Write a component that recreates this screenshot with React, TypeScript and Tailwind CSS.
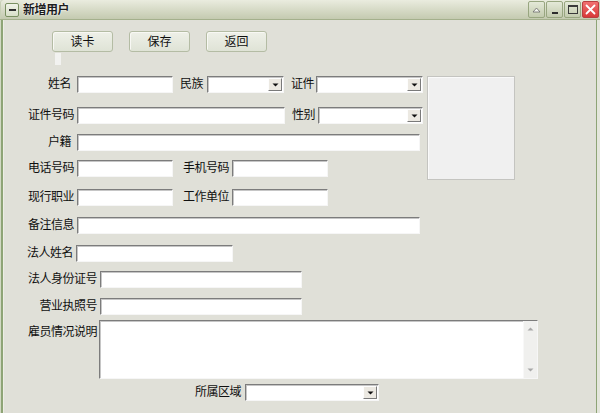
import React from "react";

const sunken =
  "bg-white border border-t-[#7c7c7c] border-l-[#7c7c7c] border-r-[#f6f6f6] border-b-[#f6f6f6] shadow-[inset_1px_1px_0_#c6c6c6]";

function Input({ w }: { w: string }) {
  return <div className={`h-[17px] ${w} ${sunken}`} />;
}

function Combo({ w }: { w: string }) {
  return (
    <div className={`h-[17px] ${w} ${sunken} flex justify-end p-[1px]`}>
      <div className="w-[14px] h-full bg-[#ece9e2] border border-t-[#fdfdfd] border-l-[#fdfdfd] border-r-[#7a7a7a] border-b-[#7a7a7a] flex items-center justify-center">
        <svg width="7" height="4" viewBox="0 0 7 4">
          <path d="M0.5 0.5 H6.5 L3.5 3.5 Z" fill="#111" />
        </svg>
      </div>
    </div>
  );
}

function Label({ w, text, cls = "text-right" }: { w: string; text: string; cls?: string }) {
  return (
    <span className={`${w} ${cls} shrink-0 leading-[17px] whitespace-nowrap tracking-[-0.5px] text-[#101010]`}>
      {text}
    </span>
  );
}

function TitleBtn({ children, red = false }: { children: React.ReactNode; red?: boolean }) {
  return (
    <div
      className={
        red
          ? "w-[17px] h-[17px] rounded-[2px] border border-[#b84040] bg-linear-to-b from-[#f07070] to-[#d83838] flex items-center justify-center"
          : "w-[17px] h-[17px] rounded-[2px] border border-[#98a680] bg-linear-to-b from-[#e4e9d8] to-[#c3cbae] flex items-center justify-center"
      }
    >
      {children}
    </div>
  );
}

function PushBtn({ text }: { text: string }) {
  return (
    <div className="w-[61px] h-[21px] rounded-[3px] border border-[#b4bca4] bg-linear-to-b from-[#eef0e8] to-[#dfe3d6] flex items-center justify-center text-[12px] text-[#101010] shadow-[inset_1px_1px_0_#f8f8f4]">
      {text}
    </div>
  );
}

export default function App() {
  return (
    <div className="w-[600px] h-[413px] overflow-hidden bg-[#e0e0d8] font-['Liberation_Sans','Noto_Sans_CJK_SC',sans-serif] text-[12px] flex flex-col">
      {/* Title bar */}
      <div className="h-[20px] shrink-0 flex items-center bg-linear-to-b from-[#eaecdf] to-[#c4cab0] border-b border-[#a4b08c] rounded-t-[3px] shadow-[inset_1px_0_0_#c8d0b6,inset_-1px_0_0_#c8d0b6]">
        <div className="ml-[5px] w-[14px] h-[14px] rounded-[2px] border border-[#7a9062] bg-linear-to-b from-[#f0f3e8] to-[#d8dfc8] flex items-center justify-center">
          <div className="w-[7px] h-[2px] bg-[#303030]" />
        </div>
        <span className="ml-[4px] font-bold text-[12px] text-[#1c1c1c] tracking-[-0.5px] [text-shadow:0_0_2px_#ffffff,0_0_1px_#ffffff]">
          新增用户
        </span>
        <div className="ml-auto mr-[1px] flex gap-[1px] items-center">
          <TitleBtn>
            <svg width="9" height="6" viewBox="0 0 9 6">
              <path d="M1 5 L4.5 1 L8 5 Z" fill="#f4f6ee" stroke="#6a6a6a" strokeWidth="0.8" />
            </svg>
          </TitleBtn>
          <TitleBtn>
            <div className="w-[6px] h-[2px] bg-[#2c2c2c] mt-[6px]" />
          </TitleBtn>
          <TitleBtn>
            <div className="w-[10px] h-[9px] border border-[#3a3a3a] border-t-2" />
          </TitleBtn>
          <TitleBtn red>
            <svg width="11" height="11" viewBox="0 0 11 11">
              <path d="M1.5 1.5 L9.5 9.5 M9.5 1.5 L1.5 9.5" stroke="#ffffff" strokeWidth="1.8" strokeLinecap="round" />
            </svg>
          </TitleBtn>
        </div>
      </div>

      {/* Body */}
      <div className="flex-1 flex flex-col shadow-[inset_1px_0_0_#d2d9c4,inset_3px_0_0_#8ea476,inset_4px_0_0_#eceee4,inset_-3px_0_0_#e4e6dc,inset_-4px_0_0_#8ea476]">
        {/* buttons */}
        <div className="mt-[11px] ml-[52px] flex gap-[16px]">
          <PushBtn text="读卡" />
          <PushBtn text="保存" />
          <PushBtn text="返回" />
        </div>
        <div className="mt-[1px] ml-[55px] w-[6px] h-[12px] bg-[#f2f2f0]" />

        {/* rows 1-4 with photo */}
        <div className="mt-[11px] flex items-start">
          <div className="flex flex-col">
            <div className="flex items-center h-[17px]">
              <Label w="w-[71px]" text="姓名" />
              <div className="ml-[6px]">
                <Input w="w-[96px]" />
              </div>
              <Label w="w-[34px]" text="民族" cls="text-left pl-[7px]" />
              <Combo w="w-[77px]" />
              <Label w="w-[32px]" text="证件" cls="text-right pr-[2px]" />
              <Combo w="w-[107px]" />
            </div>
            <div className="mt-[14px] flex items-center h-[17px]">
              <Label w="w-[74px]" text="证件号码" />
              <div className="ml-[3px]">
                <Input w="w-[208px]" />
              </div>
              <Label w="w-[33px]" text="性别" cls="text-right pr-[3px]" />
              <Combo w="w-[105px]" />
            </div>
            <div className="mt-[10px] flex items-center h-[17px]">
              <Label w="w-[71px]" text="户籍" />
              <div className="ml-[6px]">
                <Input w="w-[343px]" />
              </div>
            </div>
            <div className="mt-[9px] flex items-center h-[17px]">
              <Label w="w-[74px]" text="电话号码" />
              <div className="ml-[3px]">
                <Input w="w-[96px]" />
              </div>
              <Label w="w-[59px]" text="手机号码" cls="text-right pr-[3px]" />
              <Input w="w-[96px]" />
            </div>
          </div>
          <div className="ml-[4px] w-[88px] h-[104px] bg-[#f0f0f0] border border-[#c4c4c0] shadow-[inset_1px_1px_0_#fafafa]" />
        </div>

        <div className="mt-[9px] flex items-center h-[17px]">
          <Label w="w-[74px]" text="现行职业" />
          <div className="ml-[3px]">
            <Input w="w-[96px]" />
          </div>
          <Label w="w-[59px]" text="工作单位" cls="text-right pr-[3px]" />
          <Input w="w-[96px]" />
        </div>
        <div className="mt-[11px] flex items-center h-[17px]">
          <Label w="w-[74px]" text="备注信息" />
          <div className="ml-[3px]">
            <Input w="w-[343px]" />
          </div>
        </div>
        <div className="mt-[11px] flex items-center h-[17px]">
          <Label w="w-[73px]" text="法人姓名" />
          <div className="ml-[3px]">
            <Input w="w-[157px]" />
          </div>
        </div>
        <div className="mt-[9px] flex items-center h-[17px]">
          <Label w="w-[97px]" text="法人身份证号" />
          <div className="ml-[3px]">
            <Input w="w-[202px]" />
          </div>
        </div>
        <div className="mt-[10px] flex items-center h-[17px]">
          <Label w="w-[97px]" text="营业执照号" />
          <div className="ml-[3px]">
            <Input w="w-[202px]" />
          </div>
        </div>
        <div className="mt-[5px] flex items-start">
          <span className="w-[97px] text-right mt-[5px] leading-[14px] tracking-[-0.5px] text-[#101010] whitespace-nowrap">
            雇员情况说明
          </span>
          <div className={`ml-[2px] w-[439px] h-[59px] ${sunken} flex justify-end`}>
            <div className="w-[14px] h-full bg-[#f0f0ee] border-l border-[#f8f8f8] flex flex-col items-center justify-between py-[6px]">
              <svg width="7" height="4" viewBox="0 0 7 4">
                <path d="M0.5 3.5 H6.5 L3.5 0.5 Z" fill="#a8a8a8" />
              </svg>
              <svg width="7" height="4" viewBox="0 0 7 4">
                <path d="M0.5 0.5 H6.5 L3.5 3.5 Z" fill="#a8a8a8" />
              </svg>
            </div>
          </div>
        </div>
        <div className="mt-[5px] flex items-center h-[17px]">
          <Label w="w-[241px]" text="所属区域" />
          <div className="ml-[4px]">
            <Combo w="w-[134px]" />
          </div>
        </div>
      </div>
    </div>
  );
}
